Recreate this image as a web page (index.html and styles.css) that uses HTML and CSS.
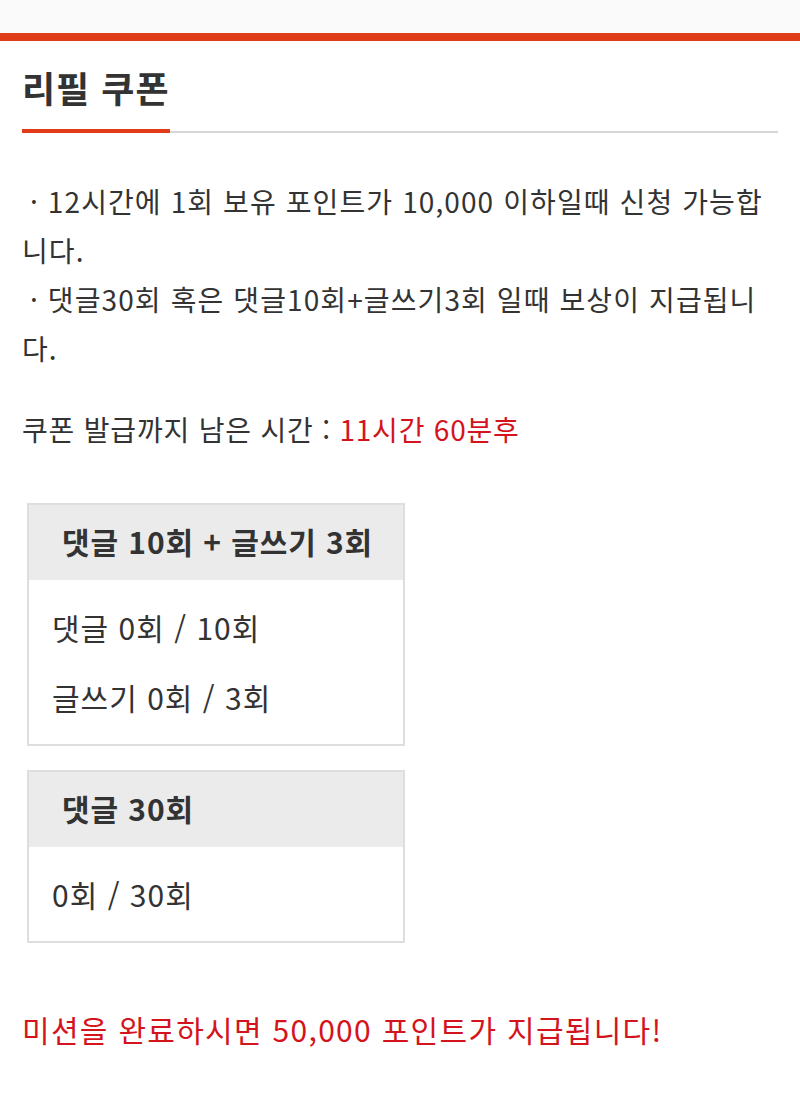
FILE: index.html
```html
<!DOCTYPE html>
<html lang="ko">
<head>
<meta charset="utf-8">
<title>리필 쿠폰</title>
<link rel="stylesheet" href="styles.css">
</head>
<body>
<div class="topbar"></div>
<main class="content">
  <div class="title-wrap">
    <h1 class="title">리필 쿠폰</h1>
  </div>
  <div class="title-line">
    <div class="title-line-accent"></div>
    <div class="title-line-rest"></div>
  </div>

  <div class="notice">
    <p class="notice-line"><span class="dot">·</span> 12시간에 1회 보유 포인트가 10,000 이하일때 신청 가능합<br>니다.</p>
    <p class="notice-line"><span class="dot">·</span> 댓글30회 혹은 댓글10회+글쓰기3회 일때 보상이 지급됩니<br>다.</p>
  </div>

  <p class="remain">쿠폰 발급까지 남은 시간 : <span class="red">11시간 60분후</span></p>

  <section class="mission">
    <div class="mission-head">댓글 10회 + 글쓰기 3회</div>
    <div class="mission-body">
      <div class="mission-row">댓글 0회 / 10회</div>
      <div class="mission-row">글쓰기 0회 / 3회</div>
    </div>
  </section>

  <section class="mission">
    <div class="mission-head">댓글 30회</div>
    <div class="mission-body">
      <div class="mission-row">0회 / 30회</div>
    </div>
  </section>

  <p class="reward">미션을 완료하시면 50,000 포인트가 지급됩니다!</p>
</main>
</body>
</html>
```

FILE: styles.css
```css
* { box-sizing: border-box; }
html, body { margin: 0; padding: 0; background: #fff; }
body {
  font-family: "Noto Sans CJK KR", "Noto Sans", sans-serif;
  color: #333;
}
.topbar {
  height: 41px;
  background: #fafafa;
  border-bottom: 8px solid #e03c17;
}
.content { padding: 0 22px; }
.title-wrap { padding-top: 23px; padding-bottom: 19px; }
.title {
  margin: 0;
  font-size: 36px;
  line-height: 46px;
  font-weight: 700;
  letter-spacing: 1px;
  color: #333;
}
.title-line { display: flex; align-items: flex-end; }
.title-line-accent { width: 148px; height: 4px; background: #e03c17; }
.title-line-rest { flex: 1; height: 2px; background: #d6d6d6; }

.notice { margin-top: 44px; }
.notice-line {
  margin: 0;
  font-size: 28px;
  line-height: 49px;
  letter-spacing: 1.1px;
  white-space: nowrap;
}
.dot { margin-left: 8px; }
.remain {
  margin: 32px 0 0;
  font-size: 28px;
  line-height: 49px;
  letter-spacing: 0.8px;
}
.red { color: #d4141c; }

.mission {
  width: 378px;
  margin: 49px 0 0 5px;
  border: 2px solid #dedede;
}
.mission + .mission { margin-top: 24px; }
.mission-head {
  height: 75px;
  background: #ebebeb;
  padding-left: 33px;
  font-size: 30px;
  font-weight: 700;
  line-height: 73px;
  letter-spacing: 0.9px;
  white-space: nowrap;
}
.mission-body { padding: 12px 0 12px 23px; }
.mission-row {
  font-size: 30px;
  line-height: 70px;
  letter-spacing: 1px;
}
.reward {
  margin: 62px 0 0;
  font-size: 30px;
  line-height: 49px;
  letter-spacing: 1.3px;
  color: #d4141c;
}
```
